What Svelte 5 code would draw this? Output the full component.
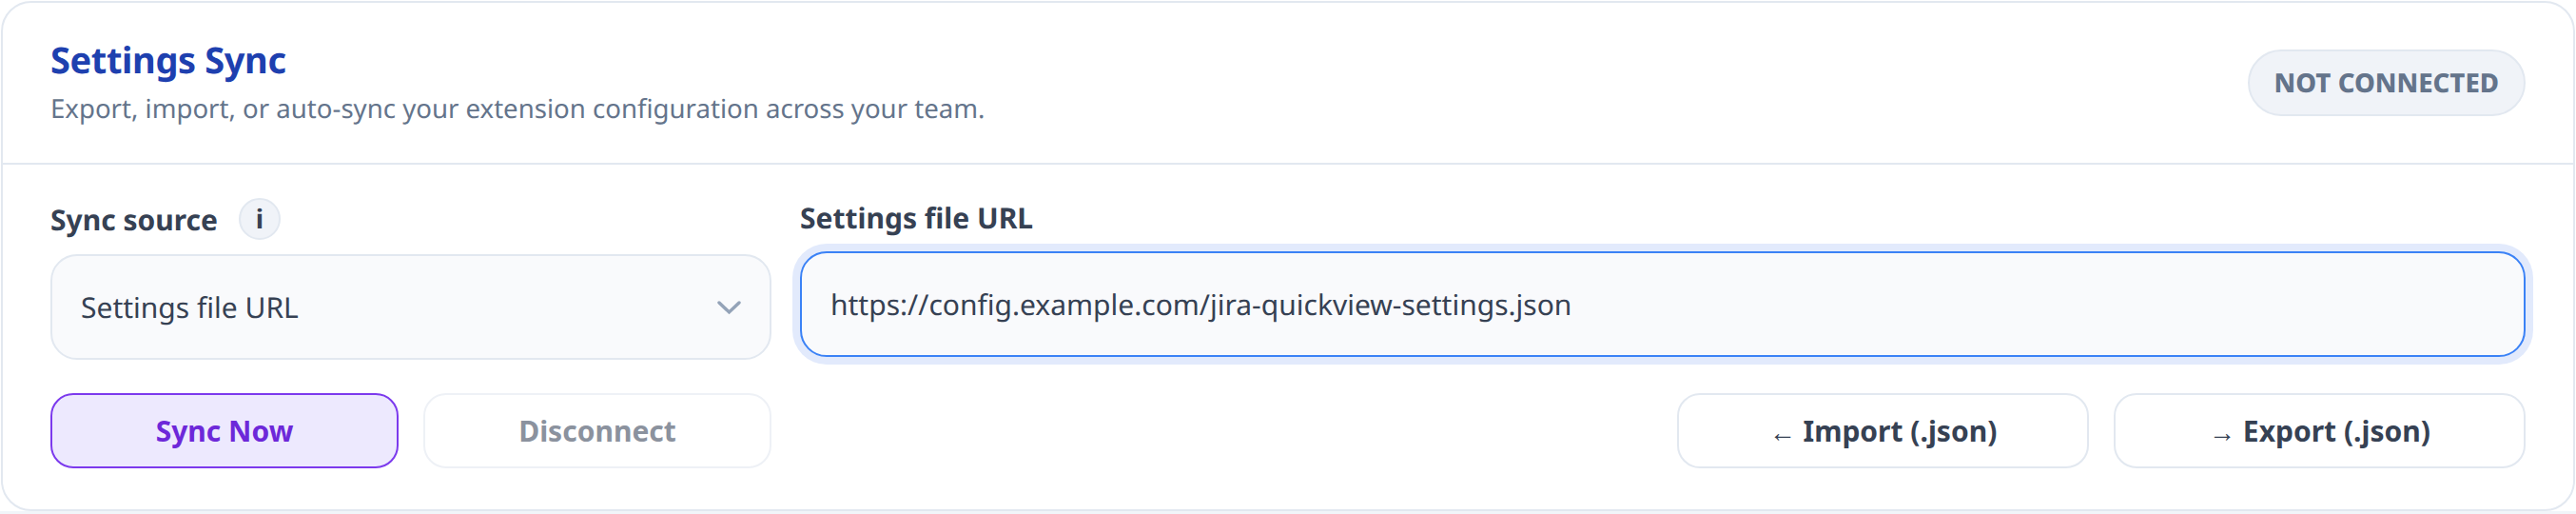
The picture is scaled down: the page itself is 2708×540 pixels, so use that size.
<script lang="ts">
	let source = 'Settings file URL';
	let url = 'https://config.example.com/jira-quickview-settings.json';
</script>

<div class="page">
	<section class="card">
		<header class="card-head">
			<div class="head-text">
				<h1>Settings Sync</h1>
				<p>Export, import, or auto-sync your extension configuration across your team.</p>
			</div>
			<span class="status">NOT CONNECTED</span>
		</header>

		<div class="card-body">
			<div class="fields">
				<div class="field">
					<div class="label-row">
						<span class="label">Sync source</span>
						<span class="info">i</span>
					</div>
					<div class="select">
						<span>{source}</span>
						<svg width="25" height="16" viewBox="0 0 25 16" fill="none" aria-hidden="true">
							<path d="M2 3 L12.5 13 L23 3" stroke="#94a3b8" stroke-width="3.4" stroke-linecap="round" />
						</svg>
					</div>
				</div>
				<div class="field">
					<div class="label-row">
						<span class="label">Settings file URL</span>
					</div>
					<div class="url-input">{url}</div>
				</div>
			</div>

			<div class="actions">
				<div class="action-group left">
					<button class="btn primary">Sync Now</button>
					<button class="btn muted">Disconnect</button>
				</div>
				<div class="action-group right">
					<button class="btn"><span class="arrow">←</span> Import (.json)</button>
					<button class="btn"><span class="arrow">→</span> Export (.json)</button>
				</div>
			</div>
		</div>
	</section>
</div>

<style>
	:global(body) {
		margin: 0;
		background: #fff;
	}

	.page {
		box-sizing: border-box;
		width: 2708px;
		height: 540px;
		padding: 1px 1px 0;
		border-bottom: 3px solid #f1f5f9;
	}

	.card {
		box-sizing: border-box;
		height: 536px;
		background: #fff;
		border: 2px solid #e2e8f0;
		border-radius: 32px;
		font-family: 'Noto Sans', sans-serif;
		text-rendering: geometricPrecision;
		color: #364153;
		overflow: hidden;
	}

	.card-head {
		display: flex;
		justify-content: space-between;
		align-items: center;
		height: 170px;
		box-sizing: border-box;
		padding: 0 50px;
		border-bottom: 2px solid #e2e8f0;
	}

	.head-text {
		padding-bottom: 3px;
	}

	h1 {
		margin: 0;
		font-size: 38px;
		line-height: 48px;
		font-weight: 700;
		letter-spacing: -0.01em;
		color: #1e40af;
	}

	.card-head p {
		margin: 9px 0 0;
		font-size: 27.6px;
		line-height: 36px;
		color: #64748b;
	}

	.status {
		box-sizing: border-box;
		height: 70px;
		display: flex;
		align-items: center;
		padding: 0 26px;
		background: #f0f3f8;
		border: 2px solid #e2e8f0;
		border-radius: 35px;
		font-size: 27.6px;
		font-weight: 800;
		color: #64748b;
	}

	.card-body {
		padding: 35px 50px 0;
	}

	.fields {
		display: grid;
		grid-template-columns: 758px 1fr;
		gap: 30px;
	}

	.label-row {
		display: flex;
		align-items: center;
		gap: 22px;
		margin-bottom: 15px;
	}

	.label {
		font-size: 30px;
		line-height: 41px;
		font-weight: 700;
	}

	.info {
		box-sizing: border-box;
		width: 44px;
		height: 44px;
		display: flex;
		align-items: center;
		justify-content: center;
		background: #f0f3f8;
		border: 2px solid #e2e8f0;
		border-radius: 50%;
		font-size: 28px;
		font-weight: 700;
	}

	.select,
	.url-input {
		box-sizing: border-box;
		height: 111px;
		display: flex;
		align-items: center;
		background: #f9fafc;
		border: 2px solid #e2e8f0;
		border-radius: 28px;
		font-size: 30px;
		padding: 0 30px;
	}

	.select {
		justify-content: space-between;
	}

	.url-input {
		border-color: #3b82f6;
		box-shadow: 0 0 0 8px #e2eafc;
	}

	.actions {
		display: flex;
		justify-content: space-between;
		margin-top: 35px;
	}

	.action-group {
		display: flex;
		gap: 26px;
	}

	.left {
		width: 758px;
	}

	.left .btn {
		flex: 1;
	}

	.right .btn {
		width: 433px;
	}

	.btn {
		box-sizing: border-box;
		height: 79px;
		background: #fff;
		border: 2px solid #e2e8f0;
		border-radius: 24px;
		font-family: inherit;
		font-size: 30px;
		font-weight: 700;
		color: #364153;
		padding: 0;
	}

	.arrow {
		font-family: 'Liberation Sans', sans-serif;
		font-size: 28px;
		font-weight: 400;
	}

	.primary {
		background: #ede9fe;
		border-color: #7c3aed;
		color: #6d28d9;
	}

	.muted {
		border-color: #eef1f6;
		color: #8b929e;
	}
</style>
